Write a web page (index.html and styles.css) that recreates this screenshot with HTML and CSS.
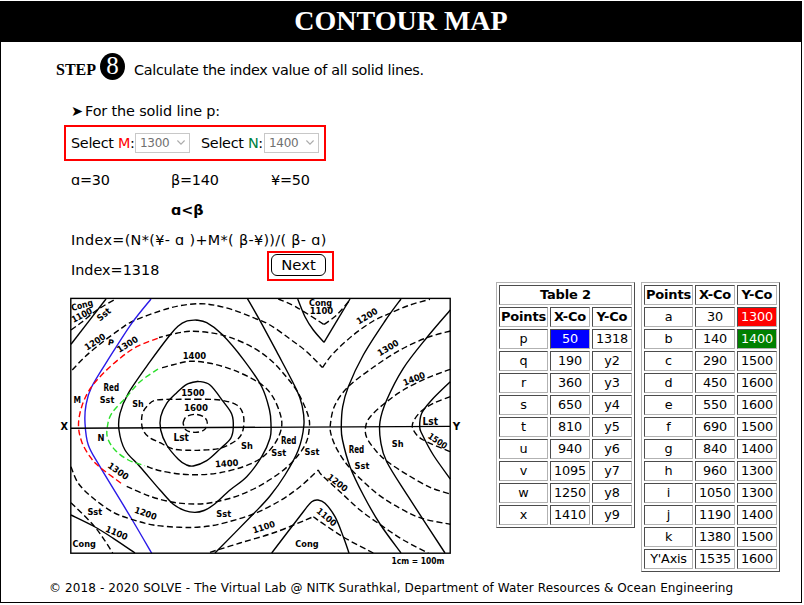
FILE: index.html
```html
<!DOCTYPE html>
<html lang="en">
<head>
<meta charset="utf-8">
<title>Contour Map</title>
<link rel="stylesheet" href="styles.css">
</head>
<body>
<div class="frame">
  <h1 class="title">CONTOUR MAP</h1>
  <main class="content">
    <section class="work">
      <div class="step"><span class="step-word">STEP</span><span class="step-num">8</span><span class="step-text">Calculate the index value of all solid lines.</span></div>
      <div class="line intro"><span class="arrow">➤</span><span class="intro-text">For the solid line p:</span></div>
      <div class="selects">
        <span class="t-sel">Select <span class="m">M</span>:</span>
        <span class="select">1300<svg width="8" height="5" viewBox="0 0 8 5"><path d="M.4.5 4 4.1 7.6.5"/></svg></span>
        <span class="t-sel second">Select <span class="n">N</span>:</span>
        <span class="select">1400<svg width="8" height="5" viewBox="0 0 8 5"><path d="M.4.5 4 4.1 7.6.5"/></svg></span>
      </div>
      <div class="line values"><span>ɑ=30</span><span>β=140</span><span>¥=50</span></div>
      <div class="line compare">ɑ&lt;β</div>
      <div class="line"><span class="formula">Index=(N*(¥- ɑ )+M*( β-¥))/( β- ɑ)</span></div>
      <div class="line result"><span>Index=1318</span><span class="next-box"><button class="next">Next</button></span></div>
      <svg class="map" width="405" height="280" viewBox="60 290 405 280">
        <g id="curves"></g>
        <rect class="solid" x="70.8" y="298.4" width="379.4" height="254.8"/>
        <path class="solid" d="M71 428.2 450 426.4"/>
        <g id="labels"></g>
      </svg>
    </section>
    <table class="points t2">
      <colgroup><col class="c1"><col class="c2"><col class="c2"></colgroup>
      <tr><th colspan="3">Table 2</th></tr>
      <tr><th>Points</th><th>X-Co</th><th>Y-Co</th></tr>
      <tr><td>p</td><td class="blue">50</td><td>1318</td></tr>
      <tr><td>q</td><td>190</td><td>y2</td></tr>
      <tr><td>r</td><td>360</td><td>y3</td></tr>
      <tr><td>s</td><td>650</td><td>y4</td></tr>
      <tr><td>t</td><td>810</td><td>y5</td></tr>
      <tr><td>u</td><td>940</td><td>y6</td></tr>
      <tr><td>v</td><td>1095</td><td>y7</td></tr>
      <tr><td>w</td><td>1250</td><td>y8</td></tr>
      <tr><td>x</td><td>1410</td><td>y9</td></tr>
    </table>
    <table class="points">
      <colgroup><col class="c1"><col class="c2"><col class="c2"></colgroup>
      <tr><th>Points</th><th>X-Co</th><th>Y-Co</th></tr>
      <tr><td>a</td><td>30</td><td class="red">1300</td></tr>
      <tr><td>b</td><td>140</td><td class="green">1400</td></tr>
      <tr><td>c</td><td>290</td><td>1500</td></tr>
      <tr><td>d</td><td>450</td><td>1600</td></tr>
      <tr><td>e</td><td>550</td><td>1600</td></tr>
      <tr><td>f</td><td>690</td><td>1500</td></tr>
      <tr><td>g</td><td>840</td><td>1400</td></tr>
      <tr><td>h</td><td>960</td><td>1300</td></tr>
      <tr><td>i</td><td>1050</td><td>1300</td></tr>
      <tr><td>j</td><td>1190</td><td>1400</td></tr>
      <tr><td>k</td><td>1380</td><td>1500</td></tr>
      <tr><td>Y'Axis</td><td>1535</td><td>1600</td></tr>
    </table>
  </main>
  <footer class="footer"><span>© 2018 - 2020 SOLVE - The Virtual Lab @ NITK Surathkal, Department of Water Resources &amp; Ocean Engineering</span></footer>
</div>
<script src="map.js"></script>
</body>
</html>
```
FILE: styles.css
```css
* { box-sizing: border-box; }
body { margin: 0; background: #fff; color: #000; font-family: "DejaVu Sans", sans-serif; font-size: 14.4px; }
.frame { margin-top: 1px; width: 802px; height: 602px; border: 1px solid #000; overflow: hidden; }
.title { margin: 0; height: 40px; background: #000; color: #fff; font: bold 28px/38px "Liberation Serif", serif; text-align: center; }
.content { display: flex; align-items: flex-start; }
.work { width: 495px; height: 531px; white-space: nowrap; }
.step { display: flex; align-items: center; height: 54px; padding: 2px 0 0 55px; }
.step-word { font: bold 16px/18px "Liberation Serif", serif; width: 44px; }
.step-num { width: 25px; height: 27px; margin: -8px 9px 0 0; border-radius: 50%; background: #000; color: #fff; font: 25px/26px "Liberation Serif", serif; text-align: center; }
.step-text { letter-spacing: -.31px; }
.intro-text { letter-spacing: -.13px; }
.line { display: flex; height: 30px; line-height: 30px; padding-left: 70px; }
.intro { height: 29px; }
.arrow { width: 14px; }
.selects { display: flex; align-items: center; width: 262px; height: 36px; margin: 0 0 4px 63px; padding: 0 0 1px 5px; border: 2px solid #f00; line-height: 20px; }
.t-sel { width: 64px; letter-spacing: -.3px; }
.t-sel.second { margin-left: 11px; width: 63px; }
.m { color: #f00; }
.n { color: #008040; }
.select { display: flex; align-items: center; justify-content: space-between; width: 55px; height: 20px; padding: 0 4px; border: 1px solid #c8c8c8; color: #707070; font-size: 12px; letter-spacing: -.3px; }
.select svg path { fill: none; stroke: #aaa; stroke-width: 1.1; }
.values span { width: 100px; letter-spacing: -.2px; }
.compare { padding-left: 170px; font-weight: bold; }
.formula { letter-spacing: .33px; }
.result { justify-content: space-between; width: 333px; }
.next-box { width: 67px; height: 30px; margin-top: -4px; padding: 1px 0 0 2px; border: 2px solid #f00; line-height: 0; }
.next { display: block; width: 55px; height: 22px; padding: 0; border: 1px solid #000; border-radius: 6px; background: #fff; color: #000; font: 14.8px/20px "DejaVu Sans", sans-serif; }
.map { display: block; margin: 5px 0 0 59px; font-weight: bold; }
.solid, .dash { fill: none; stroke: #000; stroke-width: 1.4; }
.dash { stroke-dasharray: 6 3.2; }
.blue-line { stroke: #2a1ae8; }
.red-line { stroke: #f00; }
.green-line { stroke: #2be02b; }
.points { flex: none; width: 139px; margin: 240px 0 0; table-layout: fixed; border: 1px solid; border-color: #b2b2b2 #4c4c4c #4c4c4c #b2b2b2; border-spacing: 2px; font-size: 12.8px; text-align: center; }
.t2 { margin-right: 6px; }
.points th, .points td { height: 20px; padding: 0; border: 1px solid; border-color: #4c4c4c #b2b2b2 #b2b2b2 #4c4c4c; line-height: 18px; white-space: nowrap; }
.points th { font-size: 13px; letter-spacing: -.15px; }
.points td { letter-spacing: -.2px; }
.c1 { width: 49px; }
.c2 { width: 40px; }
.points .blue { background: #00f; color: #fff; }
.points .red { background: #f00; color: #fff; }
.points .green { background: #008000; color: #fff; }
.footer { padding-left: 48px; font-size: 12px; line-height: 30px; letter-spacing: .105px; white-space: nowrap; }
```
FILE: map.js
```js
// Contours and outcrop lines, each a list of points joined by a smooth curve.
const curves = [
  ['solid', '71,344.3 106,299'],
  ['dash', '71,330 82,322 97,310 115,299.3'],
  ['dash', '72.3,370 85,356.7 103,341.7 120,329.3 133.3,321 160,311 180,305.7 200,303.7 215,305.3 233.3,310 253.3,317.7 270,325 290,339 306.7,351.7 322.5,367.5'],
  ['dash', '322.5,367.5 333.3,353.3 353.3,335 373.3,321 390,313.3 410,305 430,299.3'],
  ['solid blue-line', '151,299 131.7,323.3 110,356.7 91.7,386.7 86,405 85,423 88.3,445 100,466.7 131.7,519 151.7,553.3'],
  ['dash red-line', '157.7,338.3 136.7,346.7 120,358.3 103.3,373.3 90,389 81.7,406.7 78.5,425 81.7,441.7 90,456.7 100,467.3 121.7,483.7'],
  ['dash', '126.7,486.3 150,496.3 173.3,502.3 195,504 213.3,502.3 240,495 266.7,481.7 290,464.3 305,445 309.3,428.3 308,415 298.3,393.3 286.7,377.3 271.7,361 253.3,347.7 230,337.3 210,332.7 190,331.3 176.7,333.3 159,337.5'],
  ['solid', '196,320 186,321.3 178.3,326 170,335 150,361.7 128.3,393.3 120,413.3 119,430 125,450 140,466.7 160,490 173.3,504.3 185,510.7 195,512.4 204,510.5 213.3,505 230,490 246.7,476.7 261.7,456.7 270,438.3 271,425 269.5,410 261.7,386.7 243.3,359.3 221.7,334 206.7,322.7 196,320'],
  ['dash green-line', '158,369 140,381.7 126.7,396.7 111.7,413.3 107.3,427.3 107.7,438.3 115,450 128.3,460 145,465.7'],
  ['dash', '147,466.5 160,470.7 180,474 200,474.7 220,472.7 243.3,466.7 261.7,457.7 275,443.3 281.5,427.7 280,413.3 271.7,395 258.3,382.3 233.3,370 210,363.3 190,361.3 173.3,364.7 160,368.3'],
  ['solid', '198.3,381.3 186.7,384.3 176.7,392.7 166.7,403.3 160.7,416.7 160.7,430 166.7,445 178.3,459.3 186,464.7 193.3,466 206.7,460.7 220,449 230.7,438.3 233.3,427.3 231.7,414 223.3,401.7 210,385 198.3,381.3'],
  ['dash', '200,399.3 180,399.3 156.7,400 148.3,405 142.3,414 142.3,427.7 148.3,436.7 160,442.7 173.3,449 190,450.3 203.3,450 220,448.3 236.7,440 243,430 243.3,415 236.7,405 220,400 200,399.3'],
  ['dash', '183,423 186,417 195,414.3 204,417 207.3,423 204,430 195,432.4 186,430 183,423'],
  ['solid', '247.3,298.3 260,320.7 276.7,351.7 296.7,390 302.3,406.7 303.9,425 298.3,450 285,475 270,496 253.3,514 215,553'],
  ['solid', '297.7,299 305,316.7 313.3,330 324,342.3'],
  ['solid', '324,342.3 350,299'],
  ['dash', '278.3,299 296.7,307.3 324,324.5'],
  ['dash', '324,324.5 336.7,315 350,300'],
  ['solid', '401,299 385,321 363.3,355 348.3,386.7 342.7,406.7 341.3,426.7 342.5,440 350,466.7 363.3,495 380,524 401,553'],
  ['solid', '450.3,310 426.7,337.7 403.3,368.3 386.7,400 380,421.7 380.7,441.7 386.7,461.7 408.3,496.7 445,553'],
  ['solid', '450.3,381.7 431.7,400 421.7,413.3 419.7,426.7 422,434 433.3,455 450.3,479'],
  ['dash', '450.3,396.7 433.3,403.3 420,412.3 412.7,423.3 414,431 423.3,440 450.3,451.7'],
  ['dash', '450.3,331 426.7,337.7 400,350 373.3,367.3 348.3,386.7 335,405 330.5,423.3 331.2,435 338.3,451.7 351.7,470 376.7,493.3 400,508.3 421.7,518.3 450.3,524.3'],
  ['dash', '450.3,369.3 426.7,378.3 403.3,390 386.7,401.7 371.7,415 366,425 366.5,437 376.7,451.7 388.3,462.3 406.7,474.3 430,487.3 450.3,494'],
  ['dash', '71,466.7 78.3,483.3 93.3,498.3 113.3,512.3 131.7,519.3 153.3,525 180,527.3 200,527 220,524 253.3,514 280,500.7 300,486.7 318.3,470'],
  ['dash', '318.3,470 321.7,475 340,491.7 360,510 381.7,525.7 403.3,540 428.3,553'],
  ['dash', '210,552.3 240,543 276,532 313.3,516.7'],
  ['dash', '313.3,516.7 325,525 346.7,539 373.3,553'],
  ['solid', '271.7,553 303.3,511.7 311.7,501.7 318,500 325,503.3 335,516.7 343.3,536.7 349,553'],
  ['solid', '71,515 93.3,526 113.3,538.3 135,553'],
  ['dash', '71,502.7 91.7,523.3 103.3,538.3 112.7,553']
];

// text, centre x, centre y, rotation, width, font size
const labels = [
  ['Cong', 82, 305, -15, 22, 9], ['1100', 81.7, 315, -27, 22, 9], ['Sst', 103.7, 314.3, -40, 15, 9],
  ['1200', 95, 341.7, -33, 23, 8.8], ['P', 111, 342.3, 10, 6, 8], ['1300', 127.3, 344.3, -32, 23, 8.8],
  ['1400', 194.5, 355.5, 0, 23.5, 8.8], ['Red', 111.3, 387, 0, 15.5, 10.5], ['Sst', 107, 399.7, 0, 14.5, 9.2],
  ['M', 77.3, 399.8, 0, 7.5, 8.5], ['Sh', 138, 403.3, 0, 11.5, 8.8], ['1500', 193, 392.4, 0, 23.5, 8.8],
  ['1600', 196, 407.8, 0, 24, 8.8], ['X', 64.3, 426.2, 0, 7.5, 10], ['Cong', 320.5, 302.3, 0, 23, 8.8],
  ['1100', 321.5, 310.4, 0, 23.5, 8.8], ['1200', 367, 316, -31, 23, 8.8], ['1300', 388, 347.7, -31, 23, 8.8],
  ['1400', 414, 378.7, -22, 23, 8.8], ['Lst', 430.3, 420.8, 0, 15.5, 10.5], ['Y', 456.5, 426.5, 0, 7.5, 10],
  ['N', 101, 437.4, 0, 7, 8.5], ['1300', 118.3, 471, 35, 23, 8.8], ['1200', 145.7, 513.3, 20, 23, 8.8],
  ['1100', 116.7, 532.7, 23, 23, 8.8], ['Sst', 94.8, 512, 0, 14.8, 9.2], ['Cong', 84.2, 544, 0, 23.3, 8.8],
  ['Lst', 181.2, 437.4, 0, 15.5, 10.5], ['Sh', 247, 446, 0, 11.8, 8.8], ['Red', 288.7, 440, 0, 15.5, 10.5],
  ['Sst', 278.7, 452.7, 0, 14.8, 9.2], ['Sst', 312, 452, 0, 14.8, 9.2], ['1400', 226.7, 463.3, -4, 23.5, 8.8],
  ['Sst', 223.7, 514, 0, 14.8, 9.2], ['1100', 263.7, 527, -18, 23, 8.8], ['Cong', 306.9, 544, 0, 23.3, 8.8],
  ['Red', 356.5, 449.2, 0, 15.5, 10.5], ['Sst', 362, 465.6, 0, 14.8, 9.2], ['Sh', 397.7, 444, 0, 11.8, 8.8],
  ['1500', 437.7, 440.8, 34, 21, 8.8], ['1200', 337.7, 482.7, 37, 23, 8.8], ['1100', 326.7, 517, 40, 23, 8.8],
  ['1cm = 100m', 418, 560.8, 0, 53, 8.4]
];

const NS = 'http://www.w3.org/2000/svg';

function smooth(list) {
  const p = list.split(' ').map(s => s.split(',').map(Number));
  let d = 'M' + p[0];
  for (let i = 0; i < p.length - 1; i++) {
    const a = p[i - 1] || p[i], b = p[i], c = p[i + 1], e = p[i + 2] || c;
    d += `C${b[0] + (c[0] - a[0]) / 6},${b[1] + (c[1] - a[1]) / 6} ${c[0] - (e[0] - b[0]) / 6},${c[1] - (e[1] - b[1]) / 6} ${c}`;
  }
  return d;
}

for (const [kind, list] of curves) {
  const path = document.createElementNS(NS, 'path');
  path.setAttribute('class', kind);
  path.setAttribute('d', smooth(list));
  document.getElementById('curves').append(path);
}

for (const [text, x, y, turn, width, size] of labels) {
  const el = document.createElementNS(NS, 'text');
  el.setAttribute('transform', `translate(${x} ${y}) rotate(${turn})`);
  el.setAttribute('x', -width / 2);
  el.setAttribute('y', size * 0.365);
  el.setAttribute('textLength', width);
  el.setAttribute('lengthAdjust', 'spacingAndGlyphs');
  el.setAttribute('font-size', size);
  el.textContent = text;
  document.getElementById('labels').append(el);
}
```
